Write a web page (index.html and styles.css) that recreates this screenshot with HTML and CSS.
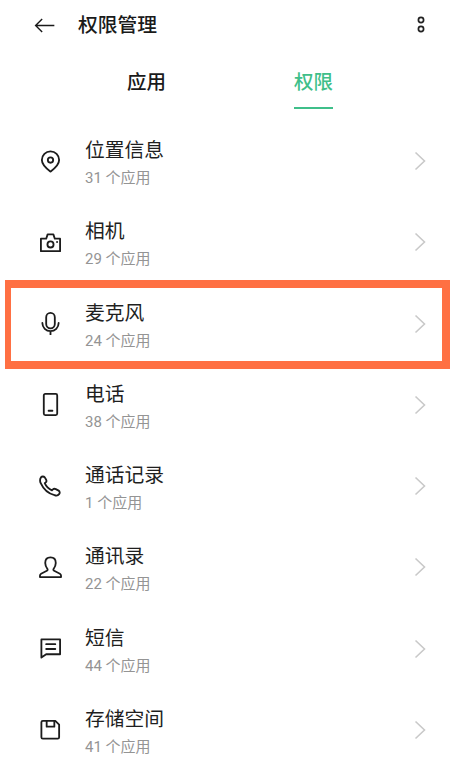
FILE: index.html
```html
<!DOCTYPE html>
<html lang="zh">
<head>
<meta charset="utf-8">
<title>权限管理</title>
<link rel="stylesheet" href="styles.css">
</head>
<body>
<div class="page">
  <header class="bar">
    <svg class="back" viewBox="0 0 22 16" fill="none"><path d="M21.500 8H1.500M8.500 1 1.500 8l7 7"/></svg>
    <h1 class="heading">权限管理</h1>
    <svg class="more" viewBox="0 0 10 20" fill="none"><circle cx="5" cy="5" r="2.600"/><circle cx="5" cy="14" r="2.600"/></svg>
  </header>
  <nav class="tabs">
    <div class="tab">应用</div>
    <div class="tab active">权限</div>
  </nav>
  <ul class="list">
    <li class="row">
      <svg class="icon" viewBox="0 0 24 24"><path d="M12 22.500c-4-3-9-6.500-9-12a9 9 0 0 1 18 0c0 5.500-5 9-9 12Z"/><circle cx="12" cy="10.500" r="2.800"/></svg>
      <div class="text"><div class="title">位置信息</div><div class="sub">31 个应用</div></div>
      <svg class="chev" viewBox="0 0 12 20"><path d="M1.500 1.500 10.500 10l-9 8.500"/></svg>
    </li>
    <li class="row">
      <svg class="icon" viewBox="0 0 24 24"><path d="M2 8h5.500L9 3.500h6L16.500 8H22v13H2Z"/><circle cx="12" cy="14" r="3.200"/><path d="M18.800 11.500h.1"/></svg>
      <div class="text"><div class="title">相机</div><div class="sub">29 个应用</div></div>
      <svg class="chev" viewBox="0 0 12 20"><path d="M1.500 1.500 10.500 10l-9 8.500"/></svg>
    </li>
    <li class="row">
      <svg class="icon" viewBox="0 0 24 24"><rect x="7.500" y="1" width="9" height="16" rx="4.500"/><path d="M3.500 11.500a8.500 8.500 0 0 0 17 0M12 20v3.500"/></svg>
      <div class="text"><div class="title">麦克风</div><div class="sub">24 个应用</div></div>
      <svg class="chev" viewBox="0 0 12 20"><path d="M1.500 1.500 10.500 10l-9 8.500"/></svg>
    </li>
    <li class="row">
      <svg class="icon" viewBox="0 0 24 24"><rect x="5" y="1" width="14" height="22" rx="1.500"/><path d="M10 18.500h4"/></svg>
      <div class="text"><div class="title">电话</div><div class="sub">38 个应用</div></div>
      <svg class="chev" viewBox="0 0 12 20"><path d="M1.500 1.500 10.500 10l-9 8.500"/></svg>
    </li>
    <li class="row">
      <svg class="icon" viewBox="0 0 24 24"><path d="M2 2.500c1-1.200 3-1.200 4 0l1.500 2.500c.5 1 .3 2-.5 2.700L6 8.500c1.500 3.500 4 6 7.500 7.500l1-1c.8-.7 2-.8 3-.3l3 1.600c1.300.8 1.500 2.500.5 3.700-1 1.300-3 1.800-4.800 1C9.500 19.500 4.500 14.500 1.500 8c-.6-2-.5-4 .5-5.500Z"/></svg>
      <div class="text"><div class="title">通话记录</div><div class="sub">1 个应用</div></div>
      <svg class="chev" viewBox="0 0 12 20"><path d="M1.500 1.500 10.500 10l-9 8.500"/></svg>
    </li>
    <li class="row">
      <svg class="icon" viewBox="0 0 24 24"><path d="M12 1.500c-3.500 0-5.500 2.500-5.500 5.800 0 2.600 1.200 4.700 2.300 6.200.4.700.2 1.500-.6 1.900L2.200 18.500c-.7.400-1.200 1-1.200 2v1.500h22v-1.500c0-1-.5-1.600-1.200-2l-6-3.100c-.8-.4-1-1.200-.6-1.900 1.100-1.500 2.300-3.600 2.300-6.200 0-3.300-2-5.800-5.500-5.800Z"/></svg>
      <div class="text"><div class="title">通讯录</div><div class="sub">22 个应用</div></div>
      <svg class="chev" viewBox="0 0 12 20"><path d="M1.500 1.500 10.500 10l-9 8.500"/></svg>
    </li>
    <li class="row">
      <svg class="icon" viewBox="0 0 24 24"><path d="M2.500 2.500h19.500v15.500H7.500l-5 3.500Z"/><path d="M7.500 7.500h9.500M7.500 12.500h9.500"/></svg>
      <div class="text"><div class="title">短信</div><div class="sub">44 个应用</div></div>
      <svg class="chev" viewBox="0 0 12 20"><path d="M1.500 1.500 10.500 10l-9 8.500"/></svg>
    </li>
    <li class="row">
      <svg class="icon" viewBox="0 0 24 24"><path d="M4 3h13l4 4v13a1.500 1.500 0 0 1-1.500 1.500H4A1.500 1.500 0 0 1 2.500 20V4.500A1.500 1.500 0 0 1 4 3Z"/><path d="M8 3v6h8V3"/></svg>
      <div class="text"><div class="title">存储空间</div><div class="sub">41 个应用</div></div>
      <svg class="chev" viewBox="0 0 12 20"><path d="M1.500 1.500 10.500 10l-9 8.500"/></svg>
    </li>
  </ul>
  <div class="highlight"></div>
</div>
</body>
</html>
```
FILE: styles.css
```css
* { box-sizing: border-box; }
html, body { margin: 0; padding: 0; background: #fff; }
body { font-family: "Noto Sans CJK SC", "Roboto", sans-serif; color: #1a1a1a; }
.page { position: relative; width: 462px; height: 761px; overflow: hidden; }
.bar { display: flex; align-items: center; height: 50px; padding: 0 36px 0 34px; }
.back { width: 21px; height: 15px; flex: none; stroke: #1a1a1a; stroke-width: 1.500; }
.heading { margin: -2px 0 0 23px; flex: 1; font-size: 19.800px; line-height: 28px; font-weight: 500; }
.more { width: 10px; height: 20px; flex: none; stroke: #222; stroke-width: 1.700; }
.tabs { display: grid; grid-template-columns: 294px auto; height: 70.500px; padding-top: 17px; }
.tab { grid-column: 1; width: 39px; font-size: 19.500px; line-height: 28px; font-weight: 500; text-align: center; white-space: nowrap; margin-left: 127px; }
.tab.active { grid-column: 2; grid-row: 1; margin-left: 0; height: 41.500px; color: #3fbf8a; border-bottom: 2px solid #3fbf8a; }
.list { list-style: none; margin: 0; padding: 0; }
.row { display: flex; align-items: center; height: 81.250px; padding: 0 36px 0 39px; }
.icon { width: 23px; height: 23px; flex: none; fill: none; stroke: #1c1c1c; stroke-width: 1.900; stroke-linejoin: round; stroke-linecap: round; }
.text { flex: 1; margin-left: 23px; padding-top: 5px; }
.title { font-size: 19.800px; line-height: 28px; color: #1f1f1f; }
.sub { margin-top: 1px; font-family: "Roboto", "Noto Sans CJK SC", sans-serif; font-size: 15px; line-height: 28px; color: #949494; }
.chev { width: 12px; height: 20px; flex: none; fill: none; stroke: #c9c9c9; stroke-width: 1.600; }
.highlight { position: absolute; left: 5px; top: 280px; width: 445px; height: 89px; border: solid #ff7043; border-width: 8px 8px 8px 6px; }
```
